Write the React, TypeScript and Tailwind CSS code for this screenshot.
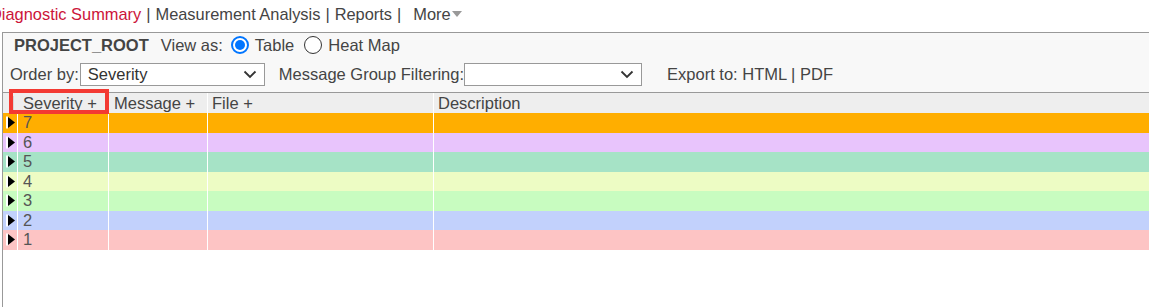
import React from 'react';

const rows = [
  { level: 7, color: 'bg-[#ffae00]' },
  { level: 6, color: 'bg-[#e8c4fc]' },
  { level: 5, color: 'bg-[#a6e3c6]' },
  { level: 4, color: 'bg-[#edfcc4]' },
  { level: 3, color: 'bg-[#c8fcc0]' },
  { level: 2, color: 'bg-[#c2d1fc]' },
  { level: 1, color: 'bg-[#fdc4c4]' },
];

function Chevron() {
  return (
    <svg width="14" height="9" viewBox="0 0 14 9" className="shrink-0">
      <path d="M1.5 1.5 L7 7 L12.5 1.5" fill="none" stroke="#333" strokeWidth="1.8" />
    </svg>
  );
}

function Select({ value, width }: { value: string; width: string }) {
  return (
    <div className={`${width} h-[23px] bg-white border border-[#999] flex items-center justify-between pl-[7px] pr-[7px]`}>
      <span className="text-[16.5px] text-[#333]">{value}</span>
      <Chevron />
    </div>
  );
}

function Radio({ checked }: { checked?: boolean }) {
  return (
    <span
      className={`w-[18px] h-[18px] rounded-full flex items-center justify-center shrink-0 ${
        checked ? 'border-2 border-[#0075ff] bg-white' : 'border border-[#333] bg-white'
      }`}
    >
      {checked && <span className="w-[10px] h-[10px] rounded-full bg-[#0075ff]" />}
    </span>
  );
}

function Arrow() {
  return (
    <svg width="10" height="13" viewBox="0 0 10 13" className="shrink-0">
      <rect x="0" y="0.5" width="2" height="12" fill="#fff" />
      <polygon points="2,1 9,6.5 2,12" fill="#000" />
    </svg>
  );
}

export default function App() {
  return (
    <div className="w-[1149px] h-[307px] bg-white overflow-hidden text-[#444]" style={{ fontFamily: '"Liberation Sans", Arial, sans-serif' }}>
      {/* top tabs */}
      <div className="h-[32px] pt-[4px] flex items-start text-[16.4px] leading-[20px] whitespace-nowrap">
        <span className="ml-[-10px] text-[#cc1439]">Diagnostic Summary</span>
        <span className="mx-[5px]">|</span>
        <span>Measurement Analysis</span>
        <span className="mx-[5px]">|</span>
        <span>Reports</span>
        <span className="ml-[5px]">|</span>
        <span className="ml-[12px]">More</span>
        <svg width="10" height="7" viewBox="0 0 10 7" className="ml-[1px] mt-[7px]">
          <polygon points="0,0 10,0 5,6" fill="#999" />
        </svg>
      </div>

      {/* panel */}
      <div className="ml-[2px] border-l border-t border-[#999] h-[275px] flex flex-col">
        <div className="bg-[#f8f8f8] h-[60px] border-b border-[#999] flex flex-col pt-[2px] text-[16.5px]">
          <div className="h-[20px] flex items-center pl-[11px]">
            <span className="font-bold text-[16.5px]">PROJECT_ROOT</span>
            <span className="ml-[12px]">View as:</span>
            <span className="ml-[8px]"><Radio checked /></span>
            <span className="ml-[6px]">Table</span>
            <span className="ml-[10px]"><Radio /></span>
            <span className="ml-[6px]">Heat Map</span>
          </div>
          <div className="mt-[8px] h-[23px] flex items-center pl-[7px]">
            <span>Order by:</span>
            <span className="ml-[1px]"><Select value="Severity" width="w-[185px]" /></span>
            <span className="ml-[14px]">Message Group Filtering:</span>
            <Select value="" width="w-[178px]" />
            <span className="ml-[25px]">Export to: HTML | PDF</span>
          </div>
        </div>

        {/* table */}
        <div className="relative text-[16.5px]">
          <div className="h-[20px] bg-[#eeeeee] flex items-center leading-[20px]">
            <div className="w-[15px] h-full flex justify-end">
              <span className="w-px h-[14px] mt-[3px] mr-[4px] bg-[#d8d8d8]" />
            </div>
            <div className="w-[91px] h-full border-r border-white pl-[5px]">Severity +</div>
            <div className="w-[99px] h-full border-r border-white pl-[5px]">Message +</div>
            <div className="w-[226px] h-full border-r border-white pl-[4px]">File +</div>
            <div className="flex-1 h-full pl-[4px]">Description</div>
          </div>
          {rows.map((r) => (
            <div key={r.level} className={`h-[19.5px] flex ${r.color} leading-[19px]`}>
              <div className="w-[15px] h-full border-r border-white flex items-center pl-[3px]">
                <Arrow />
              </div>
              <div className="w-[91px] h-full border-r border-white pl-[5px] text-[#555]">{r.level}</div>
              <div className="w-[99px] h-full border-r border-white" />
              <div className="w-[226px] h-full border-r border-white" />
              <div className="flex-1 h-full" />
            </div>
          ))}
          {/* highlight annotation */}
          <div className="absolute left-[6px] top-[-4px] w-[100px] h-[25px] border-4 border-[#f33a33] pointer-events-none" />
        </div>
      </div>
    </div>
  );
}
